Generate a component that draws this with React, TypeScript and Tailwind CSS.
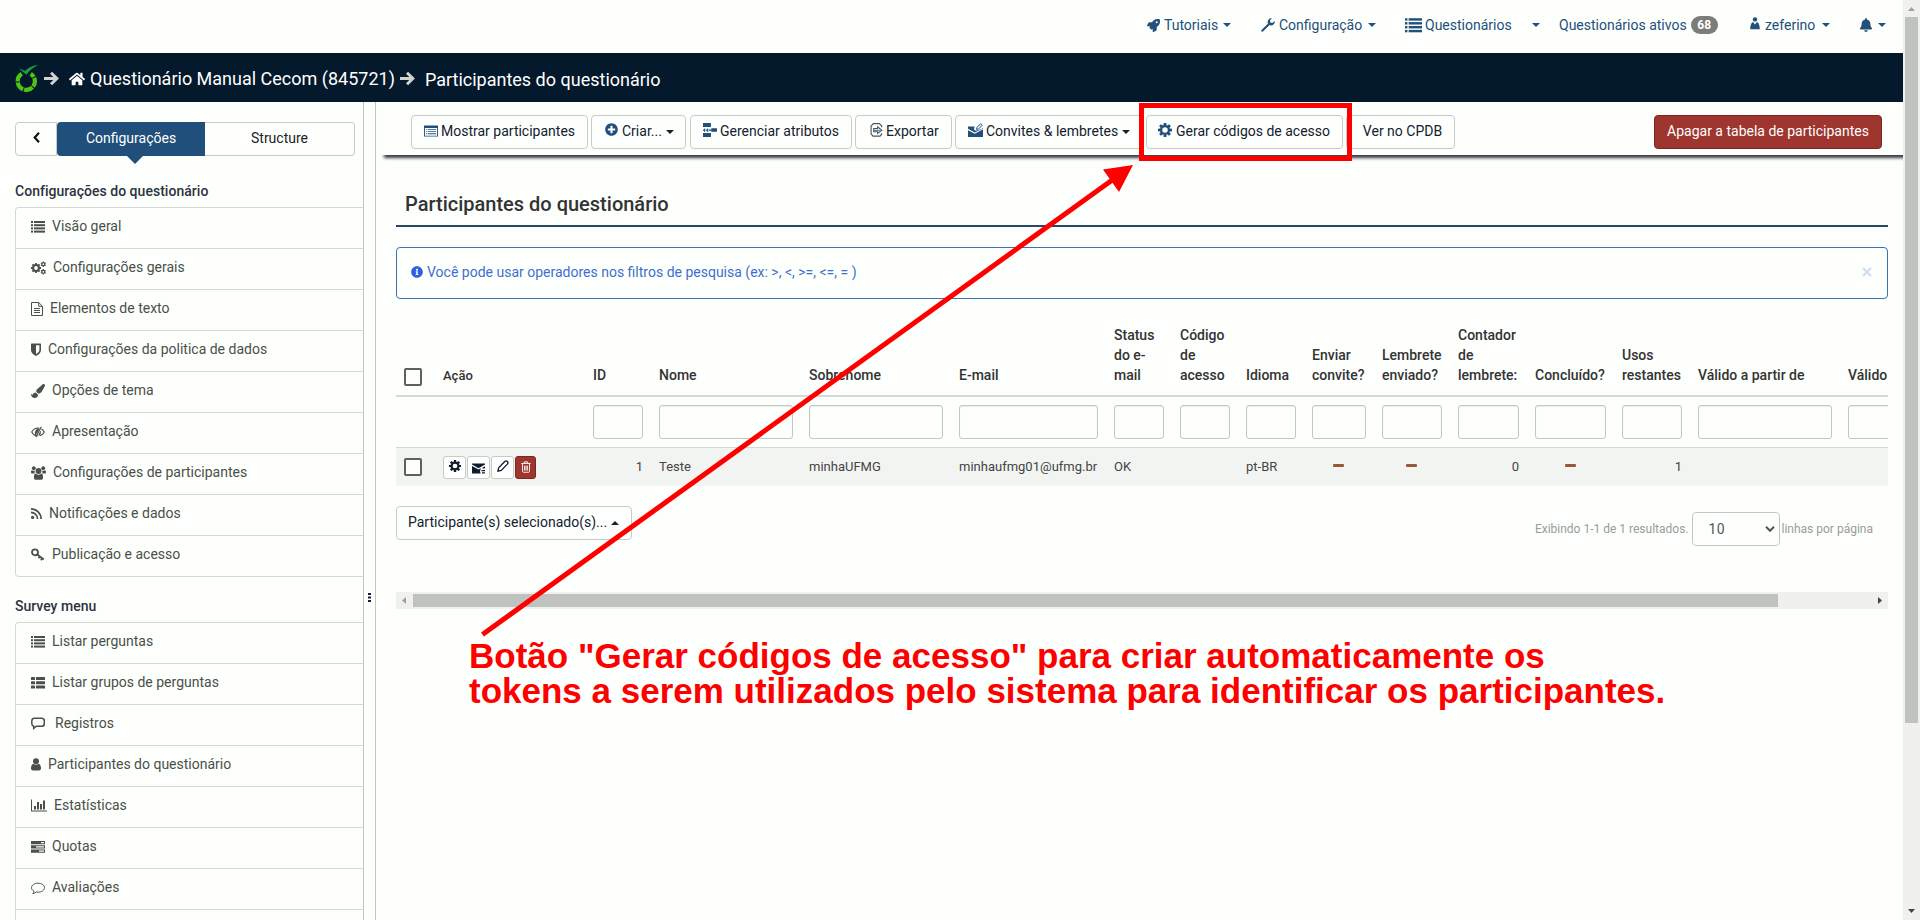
import React from "react";
import {
  FaRocket,
  FaBell,
  FaHome,
  FaPaintBrush,
  FaPlusCircle,
  FaInfoCircle,
} from "react-icons/fa";

type IconProps = { className?: string };

const Svg = ({ className = "", box = "0 0 14 14", children }: IconProps & { box?: string; children: React.ReactNode }) => (
  <svg viewBox={box} className={`shrink-0 ${className}`} fill="currentColor">
    {children}
  </svg>
);

const ListIcon = ({ className }: IconProps) => (
  <Svg className={className}>
    {[1, 4.2, 7.4, 10.6].map((y) => (
      <g key={y}>
        <rect x="0" y={y} width="2" height="2" />
        <rect x="3" y={y} width="11" height="2" />
      </g>
    ))}
  </Svg>
);

const ThListIcon = ({ className }: IconProps) => (
  <Svg className={className}>
    {[1, 5.2, 9.4].map((y) => (
      <g key={y}>
        <rect x="0" y={y} width="4" height="3.1" rx=".5" />
        <rect x="5" y={y} width="9" height="3.1" rx=".5" />
      </g>
    ))}
  </Svg>
);

const gearTeeth = [0, 45, 90, 135];

const GearIcon = ({ className }: IconProps) => (
  <Svg className={className}>
    <circle cx="7" cy="7" r="3.900" fill="none" stroke="currentColor" strokeWidth="2.300" />
    {gearTeeth.map((a) => (
      <path key={a} d="M5.700 0h2.600l.3 2.500H5.400zM5.400 11.500h3.200L8.300 14H5.700z" transform={`rotate(${a} 7 7)`} />
    ))}
  </Svg>
);

const CogsIcon = ({ className }: IconProps) => (
  <Svg className={className} box="0 0 15 14">
    <circle cx="5" cy="7" r="2.900" fill="none" stroke="currentColor" strokeWidth="2" />
    {gearTeeth.map((a) => (
      <path key={a} d="M4.100 2h1.800v2H4.100zM4.100 10h1.800v2H4.100z" transform={`rotate(${a} 5 7)`} />
    ))}
    {[3.2, 10.8].map((cy) => (
      <g key={cy}>
        <circle cx="12.300" cy={cy} r="1.500" fill="none" stroke="currentColor" strokeWidth="1.200" />
        {[0, 60, 120].map((a) => (
          <path key={a} d={`M11.700 ${cy - 2.800}h1.200v1.200h-1.200zM11.700 ${cy + 1.600}h1.200v1.200h-1.200z`} transform={`rotate(${a} 12.300 ${cy})`} />
        ))}
      </g>
    ))}
  </Svg>
);

const UsersIcon = ({ className }: IconProps) => (
  <Svg className={className} box="0 0 15 14">
    <circle cx="7.500" cy="5" r="2.900" />
    <path d="M4.700 7.400C3.400 7.700 2.900 9.400 2.900 11.200c0 1.600.8 2.600 2.100 2.600h5c1.300 0 2.100-1 2.100-2.600 0-1.800-.5-3.500-1.800-3.800a4 4 0 0 1-5.600 0z" />
    <circle cx="2.800" cy="2.200" r="1.900" />
    <circle cx="12.200" cy="2.200" r="1.900" />
    <path d="M1 4.200c-.7 0-1 .8-1 1.800C0 7 .6 7.500 1.400 7.500h2.300A4 4 0 0 1 4 4.600 3 3 0 0 1 1 4.200zM14 4.200c.7 0 1 .8 1 1.800 0 1-.6 1.500-1.400 1.500h-2.300A4 4 0 0 0 11 4.600a3 3 0 0 0 3-.4z" />
  </Svg>
);

const LowVisionIcon = ({ className }: IconProps) => (
  <Svg className={className}>
    <path d="M6.800 11C4 10.900 1.900 9.300.7 7 2 4.600 4.300 3 7 3l1.200.1M10.500 4c1.200.7 2.100 1.700 2.800 3-.9 1.800-2.500 3.200-4.500 3.800" fill="none" stroke="currentColor" strokeWidth="1.100" />
    <path d="M4.200 10.200C3.500 8 4 4 7.500 3.500l1 .3-4 6.900zM9 6.500l-1.800 4H8.500C10 9.300 10 7.500 9.700 5.500z" />
    <path d="M10.300 1.800L4.900 12" stroke="currentColor" strokeWidth="1.200" />
  </Svg>
);

const RssIcon = ({ className }: IconProps) => (
  <Svg className={className} box="0 0 11 11">
    <circle cx="1.600" cy="9.400" r="1.600" />
    <path d="M0 4.400A6.600 6.600 0 0 1 6.600 11M0 .9A10.100 10.100 0 0 1 10.100 11" fill="none" stroke="currentColor" strokeWidth="1.600" />
  </Svg>
);

const ArrowIcon = ({ className }: IconProps) => (
  <Svg className={className} box="0 0 16 16">
    <path d="M0 8h13M7.500 1.800L13.700 8l-6.200 6.200" fill="none" stroke="currentColor" strokeWidth="3.200" />
  </Svg>
);

const FileTextIcon = ({ className }: IconProps) => (
  <Svg className={className} box="0 0 12 14">
    <path d="M.5.5h7.2l3.8 3.8v9.2H.5z M7.7.5v3.8h3.8" fill="none" stroke="currentColor" />
    <path d="M3 6h6v1H3zM3 8h6v1H3zM3 10h6v1H3z" />
  </Svg>
);

const ShieldIcon = ({ className }: IconProps) => (
  <Svg className={className} box="0 0 10 13">
    <path fillRule="evenodd" d="M.5.5h9a.5.5 0 0 1 .5.5v6c0 3-3 4.9-5 5.9C3 11.900 0 10 0 7V1a.5.5 0 0 1 .5-.5zM5 2.200v8.800c1.800-1 3.400-2.400 3.400-4V2.200z" />
  </Svg>
);

const KeyIcon = ({ className }: IconProps) => (
  <Svg className={className}>
    <circle cx="4" cy="4.300" r="3" fill="none" stroke="currentColor" strokeWidth="1.8" />
    <path d="M6 6.300l6.800 5.200M8.800 8.500l-1.300 1.700M11.200 10.300l-1.300 1.900" fill="none" stroke="currentColor" strokeWidth="1.7" />
  </Svg>
);

const SpeechIcon = ({ className }: IconProps) => (
  <Svg className={className}>
    <path d="M3.400 1.200h7.200a2.700 2.700 0 0 1 2.700 2.700v2.700a2.700 2.700 0 0 1-2.700 2.700H5.300L2.700 11.500V9.200C1.500 8.900.8 7.900.8 6.600V3.900A2.700 2.700 0 0 1 3.400 1.200z" fill="none" stroke="currentColor" strokeWidth="1.500" />
  </Svg>
);

const CommentIcon = ({ className }: IconProps) => (
  <Svg className={className}>
    <path d="M7 2.200c3.600 0 6.500 2 6.500 4.500s-2.900 4.500-6.500 4.500c-.6 0-1.200-.1-1.700-.2-1 .9-2.200 1.400-3.500 1.600.7-.7 1.100-1.500 1.200-2.400C1.400 9.400.5 8.100.5 6.700.5 4.200 3.400 2.200 7 2.200z" fill="none" stroke="currentColor" strokeWidth="1" />
  </Svg>
);

const UserIcon = ({ className }: IconProps) => (
  <Svg className={className} box="0 0 10 13">
    <circle cx="5" cy="3.300" r="3" />
    <path d="M2.500 5.700C.8 6 0 8 0 10.300 0 11.600.8 12.500 2 12.500h6c1.200 0 2-.9 2-2.200C10 8 9.200 6 7.500 5.700a3.900 3.900 0 0 1-5 0z" />
  </Svg>
);

const PersonIcon = ({ className }: IconProps) => (
  <Svg className={className} box="0 0 10 13">
    <circle cx="5" cy="2.400" r="2.200" />
    <path d="M2.500 5.200h.8L5 7.600l1.700-2.400h.8C9 6.200 9.800 9 9.800 12.300H.2C.2 9 1 6.200 2.500 5.200z" />
  </Svg>
);

const BarChartIcon = ({ className }: IconProps) => (
  <Svg className={className} box="0 0 16 13">
    <path d="M0 .5h1v11h15v1H0zM3 7h2v3.500H3zM6 3h2v7.500H6zM9 5h2v5.500H9zM12 1.500h2v9h-2z" />
  </Svg>
);

const ServerIcon = ({ className }: IconProps) => (
  <Svg className={className}>
    <path fillRule="evenodd" d="M0 1h14v3.200H0zM10 2v1.200h3V2zM0 5.300h14v3.200H0zM5 6.300v1.200h8V6.300zM0 9.600h14v3.200H0zM8 10.600v1.200h5v-1.200z" />
  </Svg>
);

const WrenchIcon = ({ className }: IconProps) => (
  <Svg className={className}>
    <path d="M1.300 12.800L7.800 6.200" stroke="currentColor" strokeWidth="2" strokeLinecap="round" />
    <path d="M10.900.3a3.700 3.700 0 0 0-4 5l1.900 1.900a3.700 3.700 0 0 0 4.900-4.200l-2.300 1.900-2-.4-.5-1.900z" />
  </Svg>
);

const ListAltIcon = ({ className }: IconProps) => (
  <Svg className={className} box="0 0 15 12">
    <path fillRule="evenodd" d="M.5 0h14a.5.5 0 0 1 .5.5v11a.5.5 0 0 1-.5.5H.5a.5.5 0 0 1-.5-.5V.5A.5.500 0 0 1 .5 0zM1 2.800V11h13V2.800z" />
    <path d="M2 4h1v1H2zM4 4h9v1H4zM2 6.200h1v1H2zM4 6.200h9v1H4zM2 8.500h1v1H2zM4 8.500h9v1H4z" />
  </Svg>
);

const AttributesIcon = ({ className }: IconProps) => (
  <Svg className={className} box="0 0 15 15">
    <path d="M0 0h8.500v4.200H0zM0 10.800h8.500V15H0zM9 5.500h6v4H9zM0 7h2v1.400H0zM3 7h2v1.400H3zM6 7h3v1.400H6zM1.300 5.800h1V9.600h-1zM4.500 5.800h1v3.800h-1z" />
  </Svg>
);

const ExportIcon = ({ className }: IconProps) => (
  <Svg className={className} box="0 0 13 15">
    <path d="M12 4.500V3L9.500.7H3.200L.7 3.200v8.300l2 2.600h7.600L12 12v-1" fill="none" stroke="#4b5257" strokeWidth="1.200" />
    <path d="M3.500 6h4.200V4.200L12.300 7.800 7.700 11.200V9.300H3.500z" fill="none" stroke="#4b5257" strokeWidth="1.100" />
    <path d="M4 7.300h6v1H4z" />
  </Svg>
);

const InviteIcon = ({ className }: IconProps) => (
  <Svg className={className} box="0 0 15 15">
    <path d="M0 3.500h6.500L6 6.500l1.500 1.300 2.300-.6 5.200-2V14H0V7.200l6.800 3.600L15 6.300v-.8L6.800 9.600 0 5.800z" />
    <path d="M8.500 6.500L9 4.300 12.500.8l1.700 1.500-3.600 3.600z" fill="none" stroke="currentColor" strokeWidth="1" />
  </Svg>
);

const MailRowIcon = ({ className }: IconProps) => (
  <Svg className={className} box="0 0 13 11">
    <path d="M0 .5h13v1L6.500 5.200 0 1.500zM0 3l6.500 3.500L9 5.200 8 8l.6 2.500H0zM10 5l3-1.800V5.500h-2zM9.500 7H13v1.200H9.500zM10 9.200h3v1.300h-3z" />
  </Svg>
);

const PencilIcon = ({ className }: IconProps) => (
  <Svg className={className} box="0 0 13 13">
    <path d="M1 12l.8-3.600L8.400 1.700C9.200.8 10.400.8 11.200 1.600s.8 2 0 2.900L4.600 11.200z" fill="none" stroke="currentColor" strokeWidth="1.400" />
  </Svg>
);

const TrashIcon = ({ className }: IconProps) => (
  <Svg className={className} box="0 0 11 13">
    <path d="M.3 2.600h10.400M3.700 2.400V.8h3.600v1.600M1.700 3v8.200c0 .7.400 1.100 1 1.100h5.600c.6 0 1-.4 1-1.100V3M4 5v5.500M5.500 5v5.500M7 5v5.500" fill="none" stroke="currentColor" strokeWidth="1" />
  </Svg>
);

const Caret = ({ className = "" }: IconProps) => (
  <Svg className={`h-1 w-2 ${className}`} box="0 0 8 4">
    <path d="M0 0h8L4 4z" />
  </Svg>
);

const Logo = () => (
  <Svg className="h-[27px] w-6" box="0 0 24 27">
    <path d="M6.800 8.900A8.600 8.600 0 1 0 15.700 8.900" fill="none" stroke="#4fc412" strokeWidth="4.200" strokeDasharray="9 1" />
    <path d="M4 3.500l6.300 2.300C13.500 2.300 18 .3 23.500 0 18.500 2 14.500 5.300 11.300 9.800z" fill="#1f9a45" />
  </Svg>
);

const settingsMenu: [React.ReactNode, string][] = [
  [<ListIcon className="mr-[7px] size-[14px]" />, "Visão geral"],
  [<CogsIcon className="mr-[7px] h-[14px] w-[15px]" />, "Configurações gerais"],
  [<FileTextIcon className="mr-[7px] h-[14px] w-3" />, "Elementos de texto"],
  [<ShieldIcon className="mr-[7px] h-[13px] w-[10px]" />, "Configurações da politica de dados"],
  [<FaPaintBrush className="mr-[7px] size-[14px]" />, "Opções de tema"],
  [<LowVisionIcon className="mr-[7px] size-[14px]" />, "Apresentação"],
  [<UsersIcon className="mr-[7px] h-[14px] w-[15px]" />, "Configurações de participantes"],
  [<RssIcon className="mr-[7px] size-[11px]" />, "Notificações e dados"],
  [<KeyIcon className="mr-[7px] size-[14px]" />, "Publicação e acesso"],
];

const surveyMenu: [React.ReactNode, string][] = [
  [<ListIcon className="mr-[7px] size-[14px]" />, "Listar perguntas"],
  [<ThListIcon className="mr-[7px] size-[14px]" />, "Listar grupos de perguntas"],
  [<SpeechIcon className="mr-[10px] size-[14px]" />, "Registros"],
  [<UserIcon className="mr-[7px] h-[13px] w-[10px]" />, "Participantes do questionário"],
  [<BarChartIcon className="mr-[7px] h-[13px] w-4" />, "Estatísticas"],
  [<ServerIcon className="mr-[7px] size-[14px]" />, "Quotas"],
  [<CommentIcon className="mr-[7px] size-[14px]" />, "Avaliações"],
  [null, ""],
];

const Menu = ({ items }: { items: [React.ReactNode, string][] }) => (
  <ul className="ml-[15px] rounded-l border-t border-l border-[#d5d8d5]">
    {items.map(([icon, label], i) => (
      <li key={i} className="flex h-[41px] items-center border-b border-[#d5d8d5] pb-[3px] pl-[15px] text-[14px] whitespace-nowrap text-[#4a4f48] last:rounded-bl">
        {icon}
        {label}
      </li>
    ))}
  </ul>
);

const Button = ({ className = "", children }: { className?: string; children: React.ReactNode }) => (
  <button className={`flex h-[34px] shrink-0 items-center rounded border border-[#c9cbc9] bg-[#fdfffd] pb-[2px] text-[14px] whitespace-nowrap text-[#14212f] ${className}`}>
    {children}
  </button>
);

const columns = ["ID", "Nome", "Sobrenome", "E-mail", "Status do e-mail", "Código de acesso", "Idioma", "Enviar convite?", "Lembrete enviado?", "Contador de lembrete:", "Concluído?", "Usos restantes", "Válido a partir de", "Válido"];
const dash = <span className="mr-px mb-[3px] h-[3px] w-[11px] rounded-[1px] bg-[#96593a]" />;
const row: [React.ReactNode, string][] = [
  ["1", "justify-end"],
  ["Teste", ""],
  ["minhaUFMG", ""],
  ["minhaufmg01@ufmg.br", ""],
  ["OK", ""],
  ["", ""],
  ["pt-BR", ""],
  [dash, "justify-center"],
  [dash, "justify-center"],
  ["0", "justify-end"],
  [dash, "justify-center"],
  ["1", "justify-end"],
  ["", ""],
  ["", ""],
];
const grid = "grid w-[1602px] grid-cols-[47px_150px_66px_150px_150px_155px_66px_66px_66px_70px_76px_77px_87px_76px_150px_150px]";

const Checkbox = () => <span className="ml-2 size-[18px] rounded-[2px] border-2 border-[#5d605d] bg-[#fdfffd]" />;

export default function App() {
  return (
    <div className="relative flex h-[920px] w-[1920px] overflow-hidden bg-[#fdfffd] font-[Roboto,sans-serif] text-[14px] text-[#333]">
      <div className="flex w-[1903px] flex-col">
        <nav className="flex h-[53px] shrink-0 items-center pb-[3px] pl-[1147px] whitespace-nowrap text-[#235079]">
          <div className="flex w-[114px] items-center">
            <FaRocket className="mr-1 size-[13px]" />Tutoriais<Caret className="ml-[5px]" />
          </div>
          <div className="flex w-[144px] items-center">
            <WrenchIcon className="mr-1 size-[14px]" />Configuração<Caret className="ml-[6px]" />
          </div>
          <div className="flex w-[154px] items-center">
            <ListIcon className="mr-[3px] size-[17px]" />Questionários<Caret className="ml-5" />
          </div>
          <div className="flex w-[191px] items-center">
            Questionários ativos
            <span className="ml-1 flex h-[18px] w-[27px] items-center justify-center rounded-full bg-[#7b7d7b] text-[12px] font-bold text-white">68</span>
          </div>
          <div className="flex w-[109px] items-center">
            <PersonIcon className="mr-[5px] mb-1 h-[13px] w-[10px]" />zeferino<Caret className="ml-[7px]" />
          </div>
          <FaBell className="size-[14px]" />
          <Caret className="ml-[5px]" />
        </nav>

        <header className="flex h-[49px] shrink-0 items-center bg-[#04192b] pt-[2px] pl-[15px] text-[18px] whitespace-nowrap text-white">
          <Logo />
          <ArrowIcon className="ml-[5px] size-[15px] text-[#d0d2d0]" />
          <FaHome className="mr-[5px] ml-[10px] size-4" />
          Questionário Manual Cecom (845721)
          <ArrowIcon className="mr-[10px] ml-[5px] size-[15px] text-[#d0d2d0]" />
          <span className="pt-0.5">Participantes do questionário</span>
        </header>

        <div className="flex h-[818px]">
          <aside className="w-[363px] shrink-0 overflow-hidden">
            <div className="mt-5 ml-[15px] flex h-[34px] w-[340px]">
              <div className="flex w-[42px] items-center justify-center rounded-l border border-[#c9cbc9] pb-1">
                <Svg className="h-[11px] w-[7px] text-[#111]" box="0 0 7 11">
                  <path d="M6 .8L1.700 5.500 6 10.200" fill="none" stroke="currentColor" strokeWidth="2.200" />
                </Svg>
              </div>
              <div className="relative flex w-[148px] items-center justify-center rounded-l bg-[#214f7b] pb-0.5 text-white">
                Configurações
                <Svg className="absolute -bottom-2 left-[70px] h-2 w-4 text-[#214f7b]" box="0 0 16 8">
                  <path d="M0 0h16L8 8z" />
                </Svg>
              </div>
              <div className="flex w-[150px] items-center justify-center rounded-r border border-l-0 border-[#c9cbc9] pb-0.5 text-[#222]">Structure</div>
            </div>
            <h4 className="mt-[25px] ml-[15px] h-[26px] text-[14px] leading-5 font-medium tracking-[0.03px] text-[#2c3340]">Configurações do questionário</h4>
            <Menu items={settingsMenu} />
            <h4 className="mt-[19px] ml-[15px] h-[26px] text-[14px] leading-5 font-medium text-[#2c3340]">Survey menu</h4>
            <Menu items={surveyMenu} />
          </aside>
          <div className="flex w-[13px] shrink-0 justify-center border-x border-[#c4c6c4] pt-[491px] pr-px">
            <Svg className="h-[9px] w-[3px] text-[#111b3a]" box="0 0 3 9">
              <path d="M0 0h3v2H0zM0 3.500h3v2H0zM0 7h3v2H0z" />
            </Svg>
          </div>

          <main className="flex min-w-0 flex-1 flex-col">
            <div className="ml-[5px] flex h-[53px] shrink-0 gap-[3px] pt-[13px] pl-[30px] shadow-[3px_3px_3px_#3a3a40]">
              <Button className="w-[177px] pl-3"><ListAltIcon className="mr-[3px] h-3 w-[14px] text-[#214f7b]" />Mostrar participantes</Button>
              <Button className="w-[95px] pl-[13px]"><FaPlusCircle className="mr-1 mb-[3px] size-[13px] text-[#214f7b]" />Criar...<Caret className="mt-0.5 ml-1" /></Button>
              <Button className="ml-px w-[162px] pl-3"><AttributesIcon className="mr-[3px] mb-0.5 size-[14px] text-[#214f7b]" />Gerenciar atributos</Button>
              <Button className="w-[97px] pl-[14px]"><ExportIcon className="mr-[3px] mb-[3px] h-[14px] w-[13px] text-[#214f7b]" />Exportar</Button>
              <Button className="w-[188px] pl-3"><InviteIcon className="mr-[3px] mb-0.5 size-[15px] text-[#214f7b]" />Convites &amp; lembretes<Caret className="mt-0.5 ml-1" /></Button>
              <Button className="w-[197px] pl-[11px]"><GearIcon className="mr-1 mb-[3px] size-[14px] text-[#214f7b]" />Gerar códigos de acesso</Button>
              <Button className="w-[109px] justify-center pl-1">Ver no CPDB</Button>
              <Button className="mr-[21px] ml-auto w-[228px] justify-center border-[#7b2622]! bg-[#9e352f]! text-white!">Apagar a tabela de participantes</Button>
            </div>

            <h3 className="mr-[15px] ml-[20px] flex h-[72px] shrink-0 items-end border-b-2 border-[#2b4668] pb-[7px] pl-[9px] text-[20px] leading-[28px] font-medium text-[#333]">Participantes do questionário</h3>

            <div className="mt-5 mr-[15px] ml-5 flex h-[52px] shrink-0 items-center rounded border border-[#3f6fb5] pr-[15px] pb-[2px] pl-[14px] text-[#3f6fce]">
              <FaInfoCircle className="mr-1 size-[12px] text-[#2c62dc]" />
              Você pode usar operadores nos filtros de pesquisa (ex: &gt;, &lt;, &gt;=, &lt;=, = )
              <Svg className="ml-auto size-[10px] text-[#d2dff2]" box="0 0 10 10">
                <path d="M1 1l8 8M9 1L1 9" stroke="currentColor" strokeWidth="2.400" />
              </Svg>
            </div>

            <section className="mr-[15px] ml-5 flex h-[310px] shrink-0 flex-col overflow-hidden">
              <div className={`${grid} h-[98px] shrink-0 items-end border-b-2 border-[#d5d8d5] text-[14px] leading-5 font-medium text-[#333]`}>
                <div className="flex pb-[9px]"><Checkbox /></div>
                <div className="pb-[9px] text-[13px]">Ação</div>
                {columns.map((c) => (
                  <div key={c} className="pr-3 pb-[10px]">{c}</div>
                ))}
              </div>
              <div className={`${grid} h-[51px] shrink-0 items-center border-b border-[#d5d8d5]`}>
                <div />
                <div />
                {columns.map((c) => (
                  <div key={c} className="pr-4">
                    <div className="h-[34px] rounded-[3px] border border-[#c4c7c4] shadow-[inset_0_1px_1px_rgba(0,0,0,0.075)]" />
                  </div>
                ))}
              </div>
              <div className={`${grid} h-[38px] shrink-0 items-center bg-[#f2f4f2] text-[13px] text-[#444]`}>
                <div className="flex"><Checkbox /></div>
                <div className="flex gap-px text-[#101c2c]">
                  <span className="flex h-[23px] w-[23px] items-center justify-center rounded-[3px] border border-[#c9cbc9] bg-white"><GearIcon className="mb-0.5 size-[12px]" /></span>
                  <span className="flex h-[23px] w-[23px] items-center justify-center rounded-[3px] border border-[#c9cbc9] bg-white"><MailRowIcon className="mt-0.5 h-[11px] w-[13px]" /></span>
                  <span className="flex h-[23px] w-[23px] items-center justify-center rounded-[3px] border border-[#c9cbc9] bg-white"><PencilIcon className="mb-0.5 size-[12px]" /></span>
                  <span className="flex h-[23px] w-[21px] items-center justify-center rounded-[3px] border border-[#7b2622] bg-[#9e352f] text-white"><TrashIcon className="h-[12px] w-[10px]" /></span>
                </div>
                {row.map(([value, align], i) => (
                  <div key={i} className={`flex items-center pr-4 pb-px ${align}`}>{value}</div>
                ))}
              </div>
              <div className="flex h-[106px] shrink-0 items-start justify-between pt-5">
                <Button className="w-[236px] pl-[11px]">Participante(s) selecionado(s)...<Caret className="mt-0.5 ml-1 rotate-180" /></Button>
                <div className="mt-[6px] flex items-center pr-[15px] text-[12px] text-[#999c99]">
                  Exibindo 1-1 de 1 resultados.
                  <span className="mr-[2px] ml-[3px] flex h-[34px] w-[88px] items-center justify-between rounded border border-[#c4c7c4] pr-1 pl-4 text-[14px] tracking-[0.3px] text-[#555]">
                    10
                    <Svg className="h-[6px] w-[10px]" box="0 0 10 6">
                      <path d="M1 .8l4 4 4-4" fill="none" stroke="currentColor" strokeWidth="2" />
                    </Svg>
                  </span>
                  linhas por página
                </div>
              </div>
              <div className="flex h-[17px] shrink-0 items-center bg-[#f0f1ef] px-[6px]">
                <Svg className="h-[7px] w-1 text-[#a0a2a0]" box="0 0 4 7"><path d="M4 0v7L0 3.500z" /></Svg>
                <div className="ml-[7px] h-[13px] w-[1365px] bg-[#c0c2bf]" />
                <Svg className="ml-auto h-[7px] w-1 text-[#444]" box="0 0 4 7"><path d="M0 0v7l4-3.500z" /></Svg>
              </div>
            </section>
          </main>
        </div>
      </div>

      <div className="flex w-[17px] flex-col items-center bg-[#f0f1ef]">
        <Svg className="mt-[7px] h-1 w-[7px] text-[#a0a2a0]" box="0 0 7 4"><path d="M0 4h7L3.500 0z" /></Svg>
        <div className="mt-[6px] h-[706px] w-[13px] bg-[#c0c2bf]" />
        <Svg className="mt-auto mb-[7px] h-1 w-[7px] text-[#444]" box="0 0 7 4"><path d="M0 0h7L3.500 4z" /></Svg>
      </div>

      <div className="absolute top-[103px] left-[1139px] h-[58px] w-[213px] border-[5px] border-[#fe0000]" />
      <svg className="absolute top-0 left-0 h-[920px] w-[1920px] text-[#fe0000]">
        <path d="M482.500 634.500L1115 178" stroke="currentColor" strokeWidth="5" />
        <path d="M1133 165l-30 4.500 16 22.500z" fill="currentColor" />
      </svg>
      <p className="absolute top-[638px] left-[469px] font-['Liberation_Sans',sans-serif] text-[35px] leading-[35px] font-bold whitespace-nowrap text-[#fe0000]">
        Botão "Gerar códigos de acesso" para criar automaticamente os
        <br />
        tokens a serem utilizados pelo sistema para identificar os participantes.
      </p>
    </div>
  );
}
